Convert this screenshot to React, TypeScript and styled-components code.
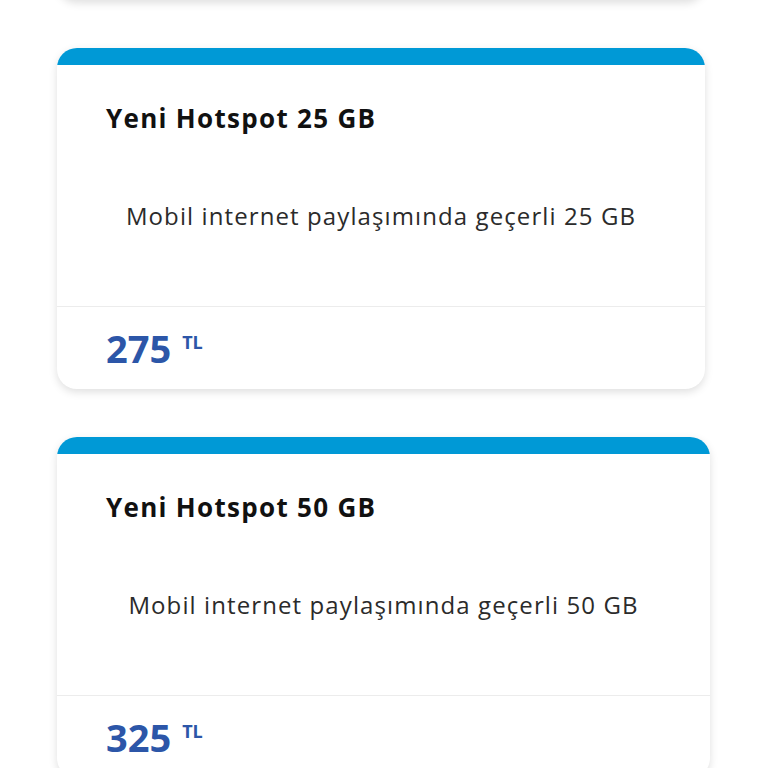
import React from 'react';
import styled, { createGlobalStyle } from 'styled-components';

const GlobalStyle = createGlobalStyle`
html, body {
    margin: 0;
    padding: 0;
    background: #ffffff;
    font-family: 'Open Sans', 'Noto Sans', sans-serif;
}
`;

const packages = [
    { id: 25, name: 'Yeni Hotspot 25 GB', description: 'Mobil internet paylaşımında geçerli 25 GB', price: 275, width: 648 },
    { id: 50, name: 'Yeni Hotspot 50 GB', description: 'Mobil internet paylaşımında geçerli 50 GB', price: 325, width: 653 },
];

const App = () => {
    const cards = packages.map(function (pack) {
        return (
            <Card key={pack.id} width={pack.width}>
                <Band />
                <Body>
                    <Title>{pack.name}</Title>
                    <Description>{pack.description}</Description>
                </Body>
                <Footer>
                    <Price>{pack.price}</Price>
                    <Currency>TL</Currency>
                </Footer>
            </Card>
        );
    });

    return (
        <Page>
            <GlobalStyle />
            <List>
                {/* previous package, scrolled almost out of view */}
                <Card width={648} />
                {cards}
            </List>
        </Page>
    );
};

export default App;

const Page = styled.div`
width: 768px;
height: 768px;
overflow: hidden;
`;

const List = styled.div`
display: flex;
flex-direction: column;
gap: 48px;
padding-left: 57px;
margin-top: -341px;
`;

const Card = styled.div<{ width: number }>`
width: ${props => props.width}px;
height: 341px;
flex: 0 0 auto;
background: #ffffff;
border-radius: 20px;
overflow: hidden;
box-shadow: 0 3px 8px rgba(0, 0, 0, 0.13);
display: flex;
flex-direction: column;
`;

const Band = styled.div`
height: 17px;
background: #0099d6;
flex: 0 0 auto;
`;

const Body = styled.div`
height: 242px;
padding: 37px 49px 0;
box-sizing: border-box;
border-bottom: 1px solid #ececec;
`;

const Title = styled.h3`
margin: 0;
font-size: 26px;
line-height: 32px;
font-weight: 700;
letter-spacing: 1.3px;
color: #111111;
`;

const Description = styled.p`
margin: 67px 0 0;
text-align: center;
font-size: 24px;
line-height: 30px;
font-weight: 400;
letter-spacing: 1.1px;
color: #2b2b2b;
`;

const Footer = styled.div`
display: flex;
align-items: flex-start;
padding: 19px 49px 0;
`;

const Price = styled.span`
font-size: 38px;
line-height: 44px;
font-weight: 700;
color: #2c56a8;
`;

const Currency = styled.span`
margin: 6px 0 0 11px;
font-size: 18px;
line-height: 20px;
font-weight: 700;
color: #2c56a8;
`;
